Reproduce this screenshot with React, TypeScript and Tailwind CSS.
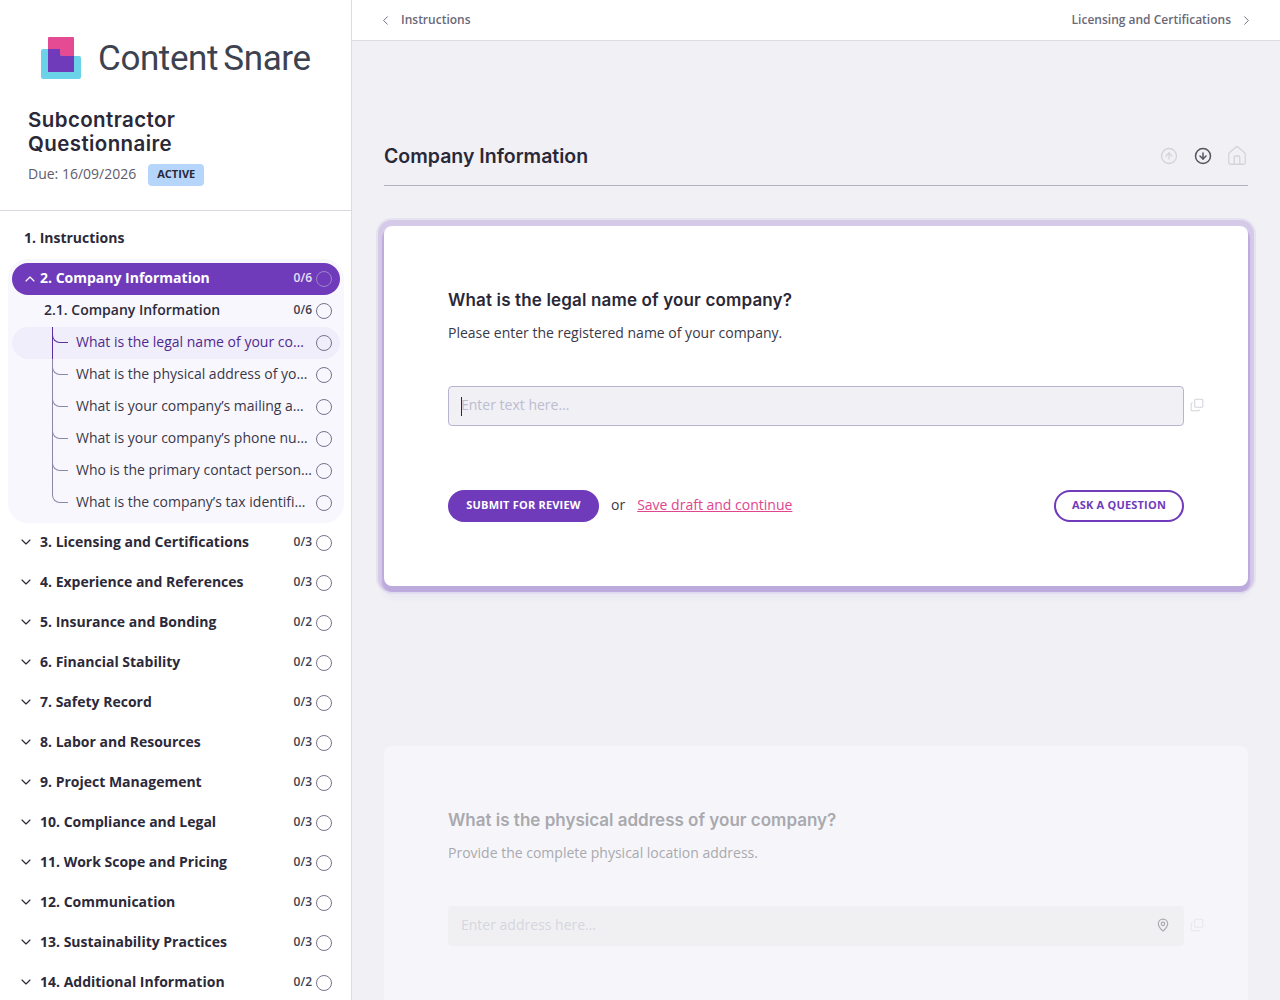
import { ChevronDown, ChevronLeft, ChevronRight, ChevronUp, CircleArrowDown, CircleArrowUp, Copy, House, MapPin } from "lucide-react";

const sections = [
  { title: "3. Licensing and Certifications", count: "0/3" },
  { title: "4. Experience and References", count: "0/3" },
  { title: "5. Insurance and Bonding", count: "0/2" },
  { title: "6. Financial Stability", count: "0/2" },
  { title: "7. Safety Record", count: "0/3" },
  { title: "8. Labor and Resources", count: "0/3" },
  { title: "9. Project Management", count: "0/3" },
  { title: "10. Compliance and Legal", count: "0/3" },
  { title: "11. Work Scope and Pricing", count: "0/3" },
  { title: "12. Communication", count: "0/3" },
  { title: "13. Sustainability Practices", count: "0/3" },
  { title: "14. Additional Information", count: "0/2" },
];

const questions = [
  "What is the legal name of your company?",
  "What is the physical address of your company?",
  "What is your company’s mailing address?",
  "What is your company’s phone number?",
  "Who is the primary contact person for this?",
  "What is the company’s tax identification number?",
];

function Logo() {
  return (
    <svg width="40" height="42" viewBox="41 37 40 42" className="shrink-0">
      <path d="M43 49H66V56H79a2 2 0 0 1 2 2V77a2 2 0 0 1-2 2H43a2 2 0 0 1-2-2V51a2 2 0 0 1 2-2Z" fill="#6bd3e8" />
      <path d="M48 38a1 1 0 0 1 1-1h24a1 1 0 0 1 1 1v18H62a2 2 0 0 1-2-2v-5H48Z" fill="#e44b93" />
      <path d="M48 49H60V54a2 2 0 0 0 2 2H74V72H48Z" fill="#6f3bbb" />
    </svg>
  );
}

function Circle({ className = "border-[#77738e]" }: { className?: string }) {
  return <span className={`h-4 w-4 shrink-0 rounded-full border bg-transparent ${className}`} />;
}

function SectionRow({ title, count }: { title: string; count: string }) {
  return (
    <div className="flex h-10 items-center pl-[18px] pr-[19px]">
      <ChevronDown size={16} strokeWidth={1.75} className="shrink-0 text-[#2c2a3a]" />
      <span className="ml-[6px] text-sm font-bold text-[#2c2a3a]">{title}</span>
      <span className="ml-auto mr-1 text-xs font-semibold text-[#3f3d4e]">{count}</span>
      <Circle className="translate-y-px border-[#77738e]" />
    </div>
  );
}

function QuestionRow({ text, active, last, wide }: { text: string; active: boolean; last: boolean; wide: boolean }) {
  return (
    <div className={`relative mx-1 flex h-8 items-center rounded-full pl-16 pr-2 ${active ? "bg-[#f1eefb]" : ""}`}>
      {!last && <span className={`absolute bottom-0 left-10 top-0 w-px ${active ? "bg-[#5b2fa0]" : "bg-[#8b87a8]"}`} />}
      <span className={`absolute left-10 top-0 h-[16px] w-4 rounded-bl-lg border-b border-l ${active ? "border-[#5b2fa0]" : "border-[#8b87a8]"}`} />
      <span className={`shrink-0 truncate pb-[2px] text-sm ${wide ? "w-[237px]" : "w-[233px]"} ${active ? "text-[#4e2a8e]" : "text-[#3a3848]"}`}>{text}</span>
      <Circle className="ml-auto border-[#77738e]" />
    </div>
  );
}

function Sidebar() {
  return (
    <aside className="h-full w-[352px] shrink-0 overflow-hidden border-r border-[#dcdce4] bg-white">
      <div className="h-[211px] border-b border-[#d8d8e2] pt-[37px]">
        <div className="flex items-center pl-[41px]">
          <Logo />
          <span className="ml-[17px] translate-y-px font-['Roboto',sans-serif] text-[35px] leading-[42px] tracking-[-0.4px] text-[#3d4250] [word-spacing:-3px]">Content Snare</span>
        </div>
        <h1 className="ml-7 mt-[29px] w-[200px] font-['Inter',sans-serif] text-[20.5px] font-semibold leading-6 tracking-[0.4px] text-[#2a2838]">
          Subcontractor Questionnaire
        </h1>
        <div className="ml-7 mt-2 flex items-center">
          <span className="pb-[2px] text-sm text-[#5d5b6c]">Due: 16/09/2026</span>
          <span className="ml-3 flex h-[22px] w-14 items-center justify-center rounded-sm bg-[#b5d5fb] pb-px text-[11px] font-bold text-[#2a2838]">ACTIVE</span>
        </div>
      </div>

      <div className="pt-[7px]">
        <div className="flex h-10 items-center pl-6 text-sm font-bold text-[#2c2a3a]">1. Instructions</div>
        <div className="ml-2 mt-px w-[336px] rounded-[20px] bg-[#f8f7fe] pb-1 pt-1">
          <div className="mx-1 flex h-8 items-center rounded-full bg-[#6f3bbb] pl-[10px] pr-2 text-white">
            <ChevronUp size={16} strokeWidth={1.75} className="shrink-0" />
            <span className="ml-[2px] pb-[2px] text-sm font-bold">2. Company Information</span>
            <span className="ml-auto mr-1 pb-[2px] text-xs font-semibold text-[#e6e0f4]">0/6</span>
            <Circle className="border-[#9d86c9]" />
          </div>
          <div className="mx-1 flex h-8 items-center pl-8 pr-2">
            <span className="pb-[2px] text-sm font-semibold text-[#2c2a3a]">2.1. Company Information</span>
            <span className="ml-auto mr-1 pb-[2px] text-xs font-semibold text-[#3f3d4e]">0/6</span>
            <Circle />
          </div>
          {questions.map((q, i) => (
            <QuestionRow key={q} text={q} active={i === 0} last={i === questions.length - 1} wide={i === 4} />
          ))}
        </div>
        <div className="-mt-px">
          {sections.map((s) => (
            <SectionRow key={s.title} title={s.title} count={s.count} />
          ))}
        </div>
      </div>
    </aside>
  );
}

function ActiveCard() {
  return (
    <section className="h-[360px] rounded-lg bg-white px-16 pt-[62px] shadow-[0_0_0_8px_rgba(111,59,187,0.08),0_0_0_6px_rgba(111,59,187,0.14),0_4px_1px_2px_rgba(111,59,187,0.2),0_12px_5px_1px_rgba(111,59,187,0.03)]">
      <h3 className="font-['Inter',sans-serif] text-[17px] font-semibold leading-6 tracking-[0.15px] text-[#2a2838]">
        What is the legal name of your company?
      </h3>
      <p className="mt-[11px] text-sm leading-5 text-[#3a3848]">Please enter the registered name of your company.</p>
      <div className="mt-[43px] flex items-center">
        <div className="flex h-10 w-[736px] shrink-0 items-center rounded border border-[#b5b5d0] bg-[#f0f0f5] pl-3">
          <span className="h-[19px] w-px bg-[#2a2838]" />
          <span className="-ml-px pb-[2px] text-sm text-[#bdbcd0]">Enter text here…</span>
        </div>
        <Copy size={14} strokeWidth={1.75} className="ml-[6px] shrink-0 -translate-y-px -scale-y-100 text-[#d2d2dc]" />
      </div>
      <div className="mt-16 flex h-8 items-center">
        <button className="h-8 w-[151px] rounded-full bg-[#6f3bbb] pb-[2px] text-[11px] font-bold tracking-[0.2px] text-white">SUBMIT FOR REVIEW</button>
        <span className="ml-3 pb-[2px] text-sm text-[#3a3848]">or</span>
        <a className="ml-3 pb-[2px] text-sm text-[#e0468f] underline">Save draft and continue</a>
        <button className="ml-auto h-8 w-[130px] rounded-full border-2 border-[#6f3bbb] bg-white pb-[2px] text-[11px] font-bold tracking-[0.2px] text-[#6f3bbb]">ASK A QUESTION</button>
      </div>
    </section>
  );
}

function NextCard() {
  return (
    <section className="mt-40 h-[360px] rounded-lg bg-[#f6f6fa] px-16 pt-[62px]">
      <h3 className="font-['Inter',sans-serif] text-[17px] font-semibold leading-6 text-[#a9a9ae]">
        What is the physical address of your company?
      </h3>
      <p className="mt-[11px] text-sm leading-5 text-[#a9a9ae]">Provide the complete physical location address.</p>
      <div className="mt-[43px] flex items-center">
        <div className="flex h-10 w-[736px] shrink-0 items-center justify-between rounded bg-[#f0f0f3] pl-[13px] pr-[14px]">
          <span className="pb-[2px] text-sm text-[#d6d6de]">Enter address here…</span>
          <MapPin size={14} className="-translate-y-px text-[#a9a9b0]" />
        </div>
        <Copy size={14} strokeWidth={1.75} className="ml-[6px] shrink-0 -translate-y-px -scale-y-100 text-[#e6e6ec]" />
      </div>
    </section>
  );
}

export default function App() {
  return (
    <div className="flex h-screen overflow-hidden bg-[#f0f0f5] font-['Open_Sans',sans-serif]">
      <Sidebar />
      <main className="min-w-0 flex-1 overflow-hidden">
        <nav className="flex h-[41px] items-center justify-between border-b border-[#dcdce4] bg-white pl-[26px] pr-[26px] text-xs font-semibold text-[#6a6878]">
          <div className="flex items-center gap-2">
            <ChevronLeft size={15} strokeWidth={1.5} />
            <span>Instructions</span>
          </div>
          <div className="flex items-center gap-2">
            <span>Licensing and Certifications</span>
            <ChevronRight size={15} strokeWidth={1.5} />
          </div>
        </nav>
        <div className="px-8">
          <div className="flex h-[145px] items-end justify-between border-b border-[#b3b1c1] pb-[15px]">
            <h2 className="font-['Inter',sans-serif] text-[19.5px] font-semibold leading-7 text-[#2a2838]">Company Information</h2>
            <div className="flex items-center gap-4 pb-[5px] pr-[2px]">
              <CircleArrowUp size={18} strokeWidth={1.75} className="text-[#d3d3da]" />
              <CircleArrowDown size={18} strokeWidth={2} className="text-[#55535f]" />
              <House size={22} strokeWidth={1.4} className="-mx-[2px] -my-[2px] text-[#d3d3da]" />
            </div>
          </div>
          <div className="mt-10">
            <ActiveCard />
            <NextCard />
          </div>
        </div>
      </main>
    </div>
  );
}
